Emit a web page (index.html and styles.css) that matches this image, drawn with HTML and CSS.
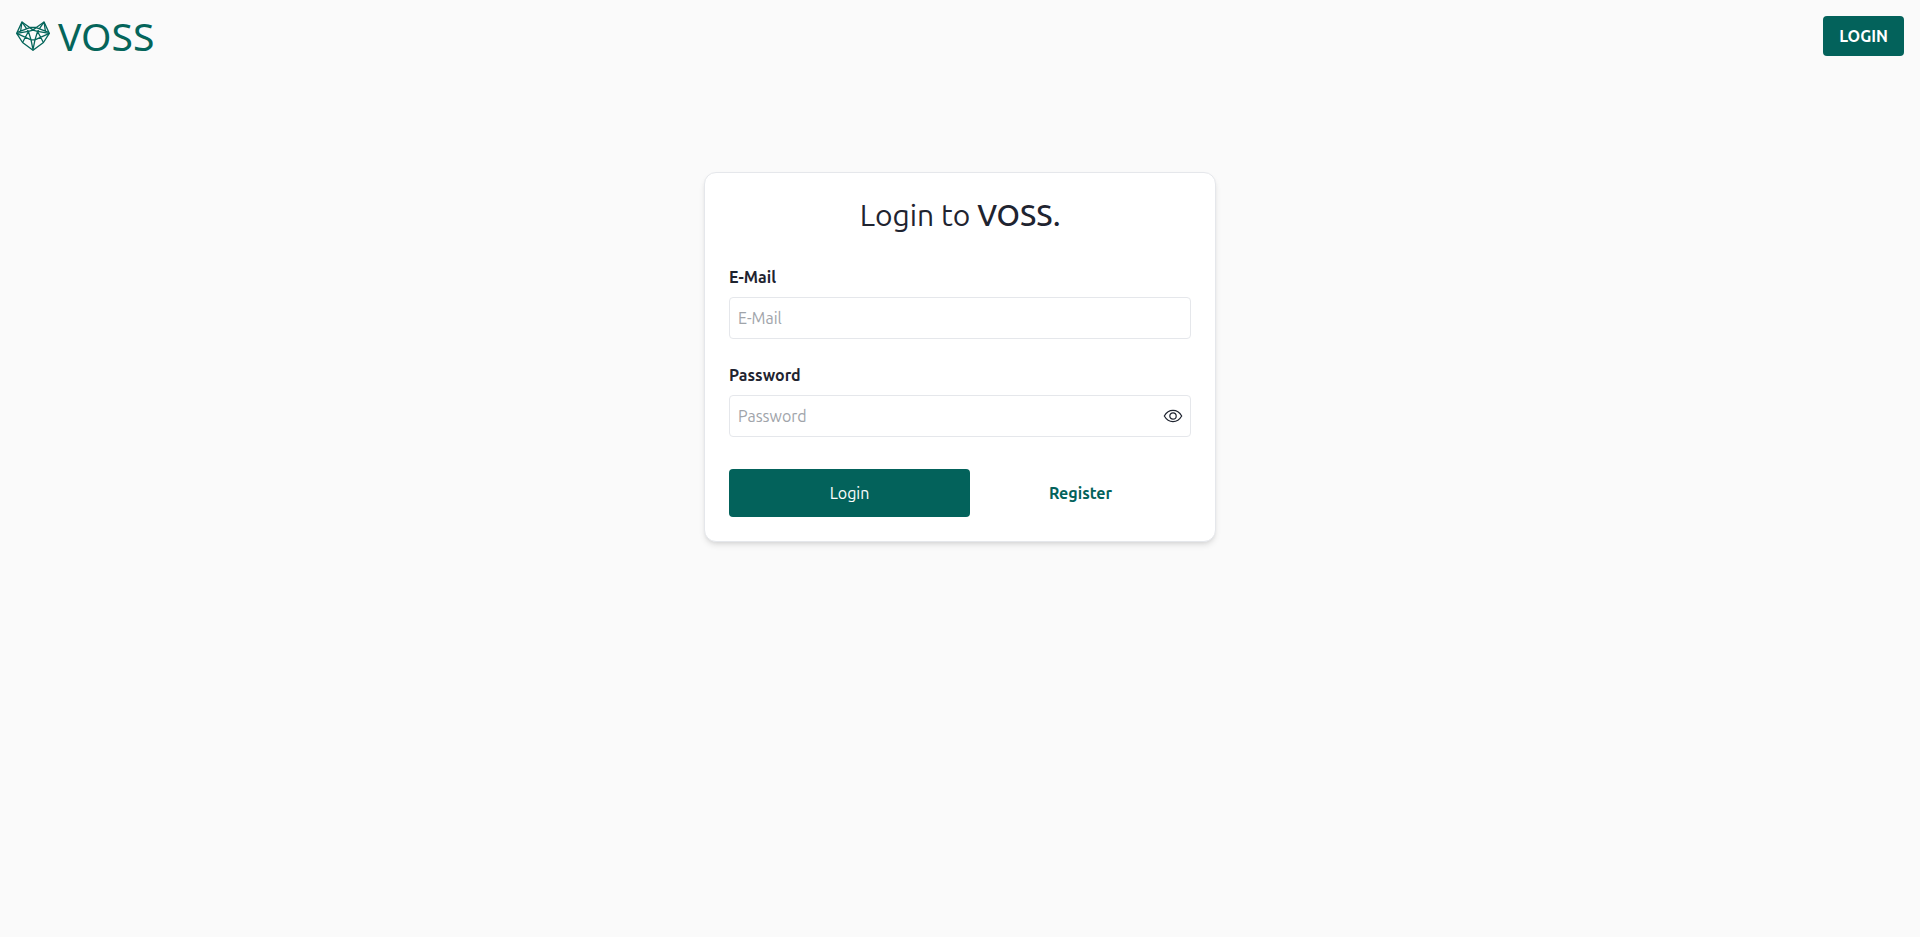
FILE: index.html
```html
<!DOCTYPE html>
<html lang="en">
<head>
  <meta charset="utf-8">
  <meta name="viewport" content="width=device-width, initial-scale=1">
  <title>VOSS</title>
  <link rel="stylesheet" href="styles.css">
</head>
<body>
  <header class="topbar">
    <a class="brand" href="#">
      <svg class="brand-mark" viewBox="0 0 104 92" fill="none" stroke="currentColor" stroke-width="4" stroke-linejoin="round" aria-hidden="true">
        <path d="M18 3 2 38 20 66 52 90 84 66 102 38 86 3 62 20H42Z"/>
        <path d="M18 3 14 32M86 3 90 32M18 3 38 32M86 3 66 32M42 20 6 34M62 20 98 34"/>
        <path d="M2 38 38 32 52 28 66 32 102 38M42 20 52 28 62 20"/>
        <path d="M38 32 46 58H58L66 32M38 32 20 66M66 32 84 66M2 38 46 58M102 38 58 58M46 58 52 88 58 58"/>
      </svg>
      <span class="brand-name">VOSS</span>
    </a>
    <a class="topbar-login" href="#login">LOGIN</a>
  </header>

  <main class="page">
    <form class="card" id="login">
      <h1 class="card-title">Login to <span class="card-title-name">VOSS.</span></h1>

      <div class="field">
        <label class="field-label" for="email">E-Mail</label>
        <input class="field-input" id="email" type="email" placeholder="E-Mail">
      </div>

      <div class="field">
        <label class="field-label" for="password">Password</label>
        <div class="field-control">
          <input class="field-input field-input-icon" id="password" type="password" placeholder="Password">
          <button class="reveal" type="button" aria-label="Show password">
            <svg class="reveal-icon" viewBox="0 0 20 20" fill="none" stroke="currentColor" stroke-width="1.2" aria-hidden="true">
              <path d="M1.300 10C3.500 6.200 6.500 4.400 10 4.400S16.500 6.200 18.700 10C16.500 13.800 13.500 15.600 10 15.600S3.500 13.800 1.300 10Z"/>
              <circle cx="10" cy="10" r="3.200"/>
            </svg>
          </button>
        </div>
      </div>

      <div class="actions">
        <button class="submit" type="submit">Login</button>
        <a class="register" href="#register">Register</a>
      </div>
    </form>
  </main>
</body>
</html>
```
FILE: styles.css
```css
:root {
  --green: #03625b;
  --ink: #1f2430;
  --line: #e5e7eb;
}

* {
  box-sizing: border-box;
}

body {
  margin: 0;
  min-height: 100vh;
  background: #fafafa;
  color: var(--ink);
  font-family: Ubuntu, "Noto Sans", sans-serif;
  font-size: 16px;
  line-height: 24px;
}

a {
  color: inherit;
  text-decoration: none;
}

button,
input {
  font: inherit;
  color: inherit;
}

.topbar {
  display: flex;
  align-items: center;
  justify-content: space-between;
  padding: 16px;
}

.brand {
  display: flex;
  align-items: center;
  gap: 8px;
  height: 40px;
  color: #04655a;
}

.brand-mark {
  width: 34px;
  height: 30px;
}

.brand-name {
  font-family: "Noto Sans", sans-serif;
  font-size: 39px;
  line-height: 38px;
}

.topbar-login {
  padding: 8px 16px;
  border-radius: 4px;
  background: var(--green);
  color: #fff;
  font-weight: 600;
}

.page {
  display: flex;
  justify-content: center;
  padding: 100px 16px 32px;
}

.card {
  width: 100%;
  max-width: 512px;
  padding: 24px;
  border: 1px solid var(--line);
  border-radius: 12px;
  background: #fff;
  box-shadow: 0 4px 6px -1px rgba(0, 0, 0, 0.1), 0 2px 4px -2px rgba(0, 0, 0, 0.1);
}

.card-title {
  margin: 0 0 32px;
  font-size: 30px;
  font-weight: 400;
  line-height: 36px;
  text-align: center;
}

.card-title-name {
  font-weight: 500;
}

.field {
  display: grid;
  gap: 8px;
  margin-bottom: 24px;
}

.field-label {
  font-weight: 700;
}

.field-control {
  position: relative;
}

.field-input {
  display: block;
  width: 100%;
  height: 42px;
  padding: 8px;
  border: 1px solid var(--line);
  border-radius: 4px;
  background: #fff;
}

.field-input-icon {
  padding-right: 40px;
}

.field-input::placeholder {
  color: #a0a4aa;
  opacity: 1;
}

.reveal {
  position: absolute;
  top: 0;
  right: 0;
  bottom: 0;
  display: flex;
  align-items: center;
  padding: 0 8px;
  border: 0;
  background: none;
  cursor: pointer;
}

.reveal-icon {
  width: 20px;
  height: 20px;
}

.actions {
  display: grid;
  grid-template-columns: 12fr 11fr;
  margin-top: 32px;
}

.submit,
.register {
  padding: 12px;
  text-align: center;
}

.submit {
  border: 0;
  border-radius: 4px;
  background: var(--green);
  color: #fff;
  cursor: pointer;
}

.register {
  color: var(--green);
  font-weight: 700;
}
```
